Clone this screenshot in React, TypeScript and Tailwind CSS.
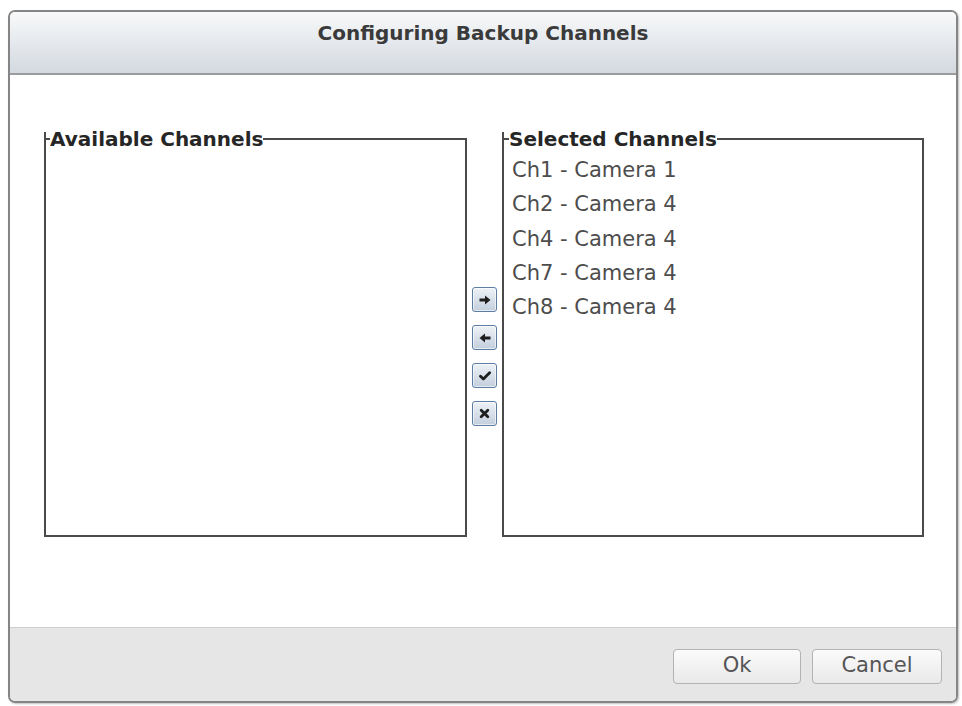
import React from "react";

const font = { fontFamily: '"DejaVu Sans", Verdana, sans-serif' };

function ArrowRight() {
  return (
    <svg width="12" height="10" viewBox="0 0 12 10">
      <path d="M0.5 3.5h5.5V0.5l5.5 4.5-5.5 4.5V6.5H0.5z" fill="#1e1e1e" />
    </svg>
  );
}
function ArrowLeft() {
  return (
    <svg width="12" height="10" viewBox="0 0 12 10">
      <path d="M11.5 3.5H6V0.5L0.5 5 6 9.5V6.5h5.5z" fill="#1e1e1e" />
    </svg>
  );
}
function Check() {
  return (
    <svg width="12" height="10" viewBox="0 0 12 10">
      <path d="M1.5 5.2 4.4 8 10.6 1.8" fill="none" stroke="#1e1e1e" strokeWidth="2.8" strokeLinecap="round" strokeLinejoin="round" />
    </svg>
  );
}
function Cross() {
  return (
    <svg width="11" height="11" viewBox="0 0 11 11">
      <path d="M2.2 2.2l6.6 6.6M8.8 2.2l-6.6 6.6" stroke="#1e1e1e" strokeWidth="2.8" strokeLinecap="round" />
    </svg>
  );
}

function MoveButton({ children }: { children: React.ReactNode }) {
  return (
    <button className="w-[25px] h-[25px] flex items-center justify-center rounded-[3px] border border-[#5d7ea4] bg-gradient-to-b from-[#eef2f7] to-[#c3cfdd] shadow-[inset_0_0_0_1px_rgba(255,255,255,0.6)]">
      {children}
    </button>
  );
}

const channels = [
  "Ch1 - Camera 1",
  "Ch2 - Camera 4",
  "Ch4 - Camera 4",
  "Ch7 - Camera 4",
  "Ch8 - Camera 4",
];

export default function App() {
  return (
    <div className="w-[962px] h-[706px] bg-white pt-[10px] pl-[8px]" style={font}>
      <div className="w-[950px] h-[693px] flex flex-col rounded-[7px] border-2 border-[#858585] overflow-hidden shadow-[1px_1px_2px_rgba(0,0,0,0.25)]">
        {/* Header */}
        <div className="h-[63px] shrink-0 bg-gradient-to-b from-[#f8f9fa] to-[#d3d9e0] border-b-2 border-[#9c9c9c] flex justify-center pt-[9px]">
          <span className="text-[20px] leading-[24px] font-bold text-[#3a3a3a]">
            Configuring Backup Channels
          </span>
        </div>

        {/* Body */}
        <div className="flex-1 bg-white pt-[52px] pl-[34px] flex">
          <fieldset className="w-[423px] h-[410px] border-2 border-[#4a4a4a] pl-[4px]">
            <legend className="relative text-[20px] leading-[24px] font-bold text-[#262626]">
              Available Channels
              <span className="absolute -left-[6px] top-[5px] w-[2px] h-[8px] bg-[#4a4a4a]" />
            </legend>
          </fieldset>

          <div className="w-[35px] flex flex-col items-center gap-[13px] pt-[160px]">
            <MoveButton>
              <ArrowRight />
            </MoveButton>
            <MoveButton>
              <ArrowLeft />
            </MoveButton>
            <MoveButton>
              <Check />
            </MoveButton>
            <MoveButton>
              <Cross />
            </MoveButton>
          </div>

          <fieldset className="w-[422px] h-[410px] border-2 border-[#4a4a4a] pl-[5px]">
            <legend className="relative text-[20px] leading-[24px] font-bold text-[#262626]">
              Selected Channels
              <span className="absolute -left-[7px] top-[5px] w-[2px] h-[8px] bg-[#4a4a4a]" />
            </legend>
            <ul className="pt-[2px] pl-[3px]">
              {channels.map((c) => (
                <li key={c} className="h-[34.3px] leading-[34px] text-[21px] text-[#4d4d4d]">
                  {c}
                </li>
              ))}
            </ul>
          </fieldset>
        </div>

        {/* Footer */}
        <div className="h-[74px] shrink-0 bg-[#e6e6e6] border-t border-[#cfcfcf] flex items-center justify-end gap-[11px] pr-[14px] pt-[3px]">
          <button className="w-[128px] h-[35px] rounded-[4px] border border-[#b3b3b3] bg-gradient-to-b from-[#fbfbfb] to-[#e9e9e9] text-[21px] text-[#555]">
            Ok
          </button>
          <button className="w-[130px] h-[35px] rounded-[4px] border border-[#b3b3b3] bg-gradient-to-b from-[#fbfbfb] to-[#e9e9e9] text-[21px] text-[#555]">
            Cancel
          </button>
        </div>
      </div>
    </div>
  );
}
